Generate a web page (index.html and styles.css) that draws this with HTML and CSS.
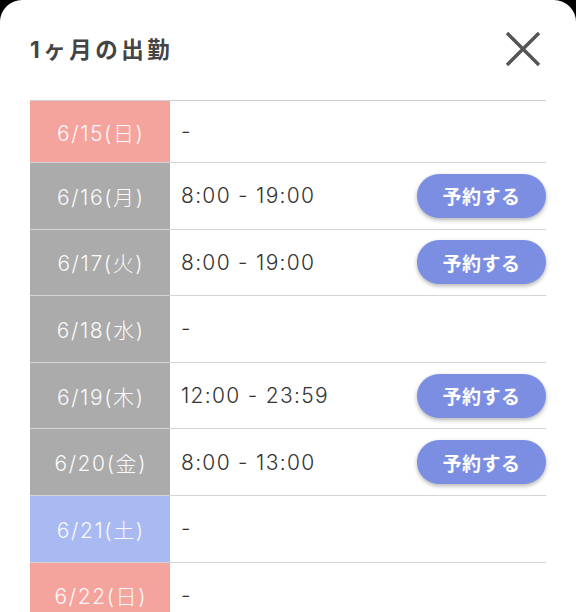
FILE: index.html
```html
<!DOCTYPE html>
<html lang="ja">
<head>
<meta charset="utf-8">
<link rel="stylesheet" href="styles.css">
</head>
<body>
<div class="modal">
  <div class="header">
    <h1 class="title">1ヶ月の出勤</h1>
    <svg class="close" width="36" height="36" viewBox="0 0 36 36"><path d="M2 2 L34 34 M34 2 L2 34" stroke="#555" stroke-width="3.4" stroke-linecap="butt"/></svg>
  </div>
  <div class="table">
    <div class="row first"><div class="date sun">6/15(日)</div><div class="cell"><span class="time">-</span></div></div>
    <div class="row"><div class="date wd">6/16(月)</div><div class="cell"><span class="time">8:00 - 19:00</span><button class="btn">予約する</button></div></div>
    <div class="row"><div class="date wd">6/17(火)</div><div class="cell"><span class="time">8:00 - 19:00</span><button class="btn">予約する</button></div></div>
    <div class="row"><div class="date wd">6/18(水)</div><div class="cell"><span class="time">-</span></div></div>
    <div class="row"><div class="date wd">6/19(木)</div><div class="cell"><span class="time">12:00 - 23:59</span><button class="btn">予約する</button></div></div>
    <div class="row"><div class="date wd">6/20(金)</div><div class="cell"><span class="time">8:00 - 13:00</span><button class="btn">予約する</button></div></div>
    <div class="row"><div class="date sat">6/21(土)</div><div class="cell"><span class="time">-</span></div></div>
    <div class="row"><div class="date sun">6/22(日)</div><div class="cell"><span class="time">-</span></div></div>
  </div>
</div>
</body>
</html>
```
FILE: styles.css
```css
html, body {
  margin: 0;
  padding: 0;
  background: #000;
  height: 612px;
  overflow: hidden;
}
body {
  font-family: Inter, "Noto Sans CJK JP", sans-serif;
}
.modal {
  background: #fff;
  border-radius: 22px 22px 0 0;
  height: 612px;
  padding: 0 30px;
  box-sizing: border-box;
}
.header {
  height: 100px;
  display: flex;
  align-items: center;
  justify-content: space-between;
  padding-bottom: 4px;
  box-sizing: border-box;
}
.title {
  margin: 0;
  font-family: Inter, "Noto Sans CJK JP", sans-serif;
  font-size: 22.5px;
  font-weight: 700;
  color: #444;
  letter-spacing: 3.5px;
}
.close {
  margin-right: 5px;
  margin-top: 2px;
}
.table {
  border-top: 1px solid #cfcfcf;
}
.row {
  display: flex;
  height: 65.6px;
  border-bottom: 1px solid #d4d4d4;
}
.row.first {
  height: 61px;
}
.date {
  width: 140px;
  flex: none;
  display: flex;
  align-items: center;
  justify-content: center;
  color: #fafafa;
  font-size: 21px;
  font-weight: 300;
  letter-spacing: 1.6px;
  text-indent: 1.6px;
}
.sun { background: #f4a39d; }
.wd { background: #ababab; }
.sat { background: #a9b9f2; }
.cell {
  flex: 1;
  display: flex;
  align-items: center;
  justify-content: space-between;
  padding-left: 11px;
}
.time {
  font-size: 21px;
  font-weight: 300;
  color: #333;
  letter-spacing: 1.3px;
}
.btn {
  width: 129px;
  height: 44px;
  border: none;
  border-radius: 22px;
  background: #7b8ee2;
  color: #fff;
  font-family: "Noto Sans CJK JP", sans-serif;
  font-size: 19px;
  font-weight: 700;
  box-shadow: 0 2px 4px rgba(0,0,0,0.3);
  padding: 0;
  letter-spacing: 0.5px;
}
```
